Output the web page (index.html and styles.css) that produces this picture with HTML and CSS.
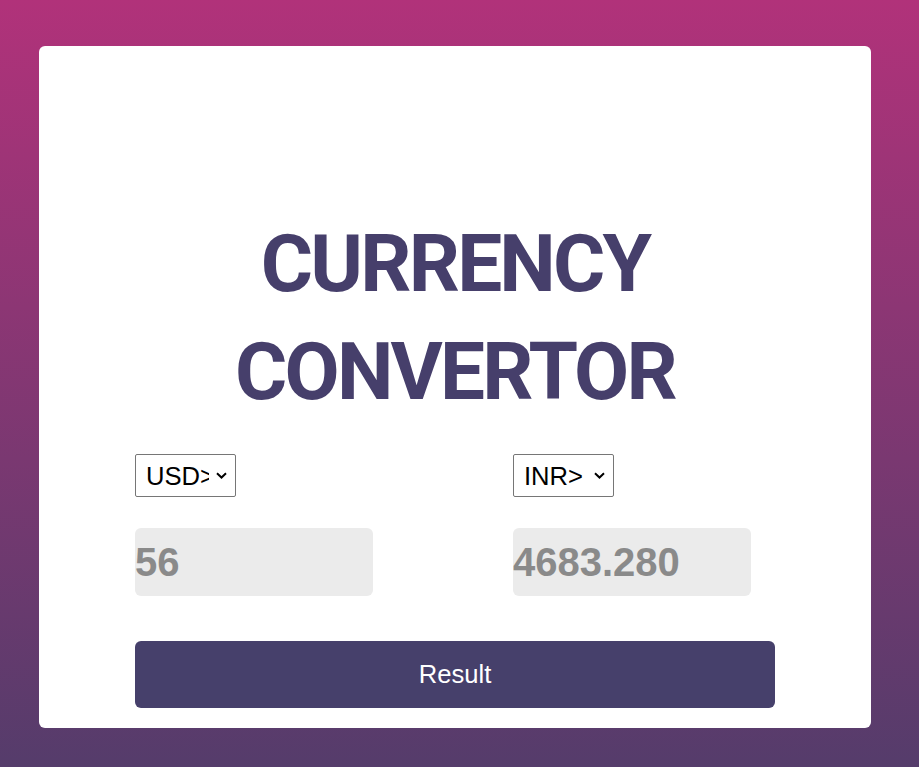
FILE: index.html
```html
<!DOCTYPE html>
<html>
<head>
<meta charset="utf-8">
<link rel="stylesheet" href="styles.css">
</head>
<body>
<div class="card">
  <h1 class="title">CURRENCY<br>CONVERTOR</h1>
  <div class="grid">
    <select class="sel"><option>USD&gt;</option></select>
    <select class="sel"><option>INR&gt;</option></select>
    <input class="amount" type="text" value="56">
    <input class="amount" type="text" value="4683.280" readonly>
  </div>
  <button class="btn">Result</button>
</div>
</body>
</html>
```
FILE: styles.css
```css
html, body {
  margin: 0;
  height: 100%;
}
body {
  background: linear-gradient(to bottom, #b1327a 0%, #553c6b 100%);
  padding-top: 46px;
  box-sizing: border-box;
  font-family: "Liberation Sans", Arial, sans-serif;
}
.card {
  margin-left: 39px;
  width: 832px;
  height: 682px;
  box-sizing: border-box;
  background: #fff;
  border-radius: 6px;
  padding: 164px 96px 20px;
  display: flex;
  flex-direction: column;
}
.title {
  margin: 0;
  font-family: Roboto, sans-serif;
  font-weight: 700;
  font-size: 80px;
  line-height: 108px;
  letter-spacing: -2.8px;
  color: #463f6b;
  text-align: center;
}
.grid {
  margin-top: 28px;
  display: grid;
  grid-template-columns: 238px 238px;
  column-gap: 140px;
  row-gap: 31px;
  justify-items: start;
}
.sel {
  -webkit-appearance: none;
  appearance: none;
  width: 101px;
  height: 43px;
  font-family: "Liberation Sans", Arial, sans-serif;
  font-size: 25.6px;
  color: #000;
  background-color: #fff;
  background-image: url("data:image/svg+xml,%3Csvg xmlns='http://www.w3.org/2000/svg' width='11' height='7' viewBox='0 0 11 7'%3E%3Cpath d='M1 1.2l4.5 4.3 4.5-4.3' fill='none' stroke='%23000' stroke-width='2'/%3E%3C/svg%3E");
  background-repeat: no-repeat;
  background-position: right 8px center;
  background-size: 11px 7px;
  border: 1px solid #767676;
  border-radius: 2px;
  padding: 0 26px 0 10px;
}
.amount {
  width: 238px;
  height: 68px;
  box-sizing: border-box;
  border: none;
  outline: none;
  border-radius: 6px;
  background: #ebebeb;
  padding: 0;
  font-family: "Liberation Sans", Arial, sans-serif;
  font-size: 40px;
  font-weight: 700;
  color: #8a8a8a;
}
.btn {
  margin-top: 45px;
  width: 640px;
  height: 67px;
  border: none;
  border-radius: 6px;
  background: #46406b;
  color: #fff;
  font-family: "Liberation Sans", Arial, sans-serif;
  font-size: 25.6px;
}
```
